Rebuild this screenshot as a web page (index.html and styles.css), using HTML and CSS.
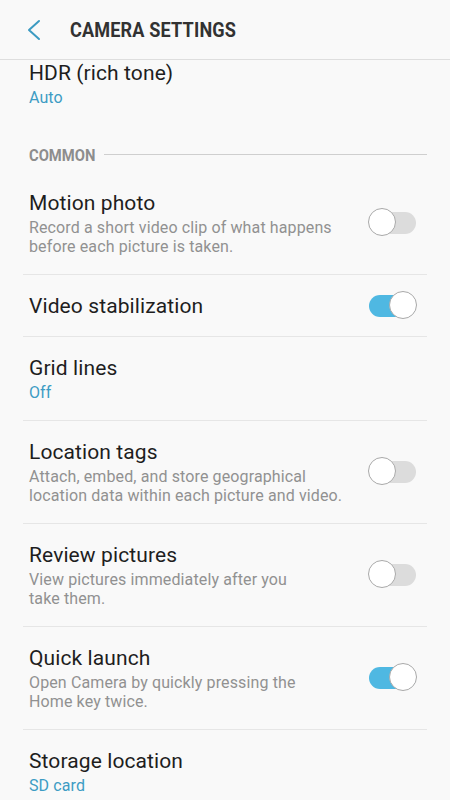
FILE: index.html
```html
<!DOCTYPE html>
<html>
<head>
<meta charset="utf-8">
<link rel="stylesheet" href="styles.css">
</head>
<body>
<header class="appbar">
  <svg class="back" width="16" height="22" viewBox="0 0 16 22"><polyline points="13,2 3,11 13,20" fill="none" stroke="#3c9bc2" stroke-width="2" stroke-linecap="round" stroke-linejoin="round"/></svg>
  <h1 class="appbar-title">CAMERA SETTINGS</h1>
</header>
<main class="list">
  <div class="item item-top">
    <div class="text">
      <div class="title">HDR (rich tone)</div>
      <div class="value">Auto</div>
    </div>
  </div>
  <div class="section">
    <span class="section-label">COMMON</span>
    <span class="section-line"></span>
  </div>
  <div class="item">
    <div class="text">
      <div class="title">Motion photo</div>
      <div class="desc">Record a short video clip of what happens<br>before each picture is taken.</div>
    </div>
    <span class="toggle"></span>
  </div>
  <div class="item single">
    <div class="text">
      <div class="title">Video stabilization</div>
    </div>
    <span class="toggle on"></span>
  </div>
  <div class="item">
    <div class="text">
      <div class="title">Grid lines</div>
      <div class="value">Off</div>
    </div>
  </div>
  <div class="item">
    <div class="text">
      <div class="title">Location tags</div>
      <div class="desc">Attach, embed, and store geographical<br>location data within each picture and video.</div>
    </div>
    <span class="toggle"></span>
  </div>
  <div class="item">
    <div class="text">
      <div class="title">Review pictures</div>
      <div class="desc">View pictures immediately after you<br>take them.</div>
    </div>
    <span class="toggle"></span>
  </div>
  <div class="item">
    <div class="text">
      <div class="title">Quick launch</div>
      <div class="desc">Open Camera by quickly pressing the<br>Home key twice.</div>
    </div>
    <span class="toggle on"></span>
  </div>
  <div class="item last">
    <div class="text">
      <div class="title">Storage location</div>
      <div class="value">SD card</div>
    </div>
  </div>
</main>
</body>
</html>
```
FILE: styles.css
```css
html, body {
  margin: 0;
  padding: 0;
  background: #f9f9f9;
  font-family: Roboto, "Noto Sans", sans-serif;
  overflow: hidden;
}
.appbar {
  height: 59px;
  border-bottom: 1px solid #dedede;
  display: flex;
  align-items: center;
  padding-left: 26px;
  box-sizing: content-box;
}
.back {
  display: block;
  margin-top: 1px;
}
.appbar-title {
  margin: 0 0 0 28px;
  font-size: 21px;
  font-weight: 700;
  color: #323232;
  transform: scaleX(0.86);
  transform-origin: left center;
  white-space: nowrap;
  letter-spacing: 0.2px;
}
.list {
  margin: 0 23px;
}
.item {
  display: flex;
  align-items: center;
  padding: 18px 10px 18px 6px;
  border-bottom: 1px solid #e6e6e6;
}
.item.single {
  padding-top: 17.5px;
  padding-bottom: 17.5px;
}
.item-top {
  padding-top: 0;
  padding-bottom: 0;
  border-bottom: none;
}
.item.last {
  border-bottom: none;
}
.text {
  flex: 1;
  min-width: 0;
}
.title {
  font-size: 21px;
  line-height: 26px;
  color: #1e1e1e;
  white-space: nowrap;
  letter-spacing: 0.1px;
}
.value {
  font-size: 16px;
  line-height: 19px;
  margin-top: 2px;
  color: #3d9cc4;
  letter-spacing: 0.1px;
}
.desc {
  font-size: 16px;
  line-height: 19px;
  margin-top: 2px;
  color: #919191;
  white-space: nowrap;
  letter-spacing: 0.12px;
}
.section {
  display: flex;
  align-items: center;
  padding: 38px 0 7px 6px;
  height: 20px;
}
.section-label {
  font-size: 17px;
  font-weight: 700;
  color: #8d8d8d;
  transform: scaleX(0.87);
  transform-origin: left center;
  margin-right: -1px;
  line-height: 20px;
}
.section-line {
  flex: 1;
  height: 1px;
  background: #cfcfcf;
  margin-top: -1px;
}
.toggle {
  position: relative;
  flex: none;
  width: 47px;
  height: 22px;
  border-radius: 11px;
  background: #dcdcdc;
  margin-right: 1px;
}
.toggle::after {
  content: "";
  position: absolute;
  top: -4px;
  left: -1px;
  width: 28px;
  height: 28px;
  box-sizing: border-box;
  border-radius: 50%;
  background: #fff;
  border: 1px solid #a9a9a9;
}
.toggle.on {
  background: #4fb8e2;
}
.toggle.on::after {
  left: auto;
  right: -1px;
}
```
